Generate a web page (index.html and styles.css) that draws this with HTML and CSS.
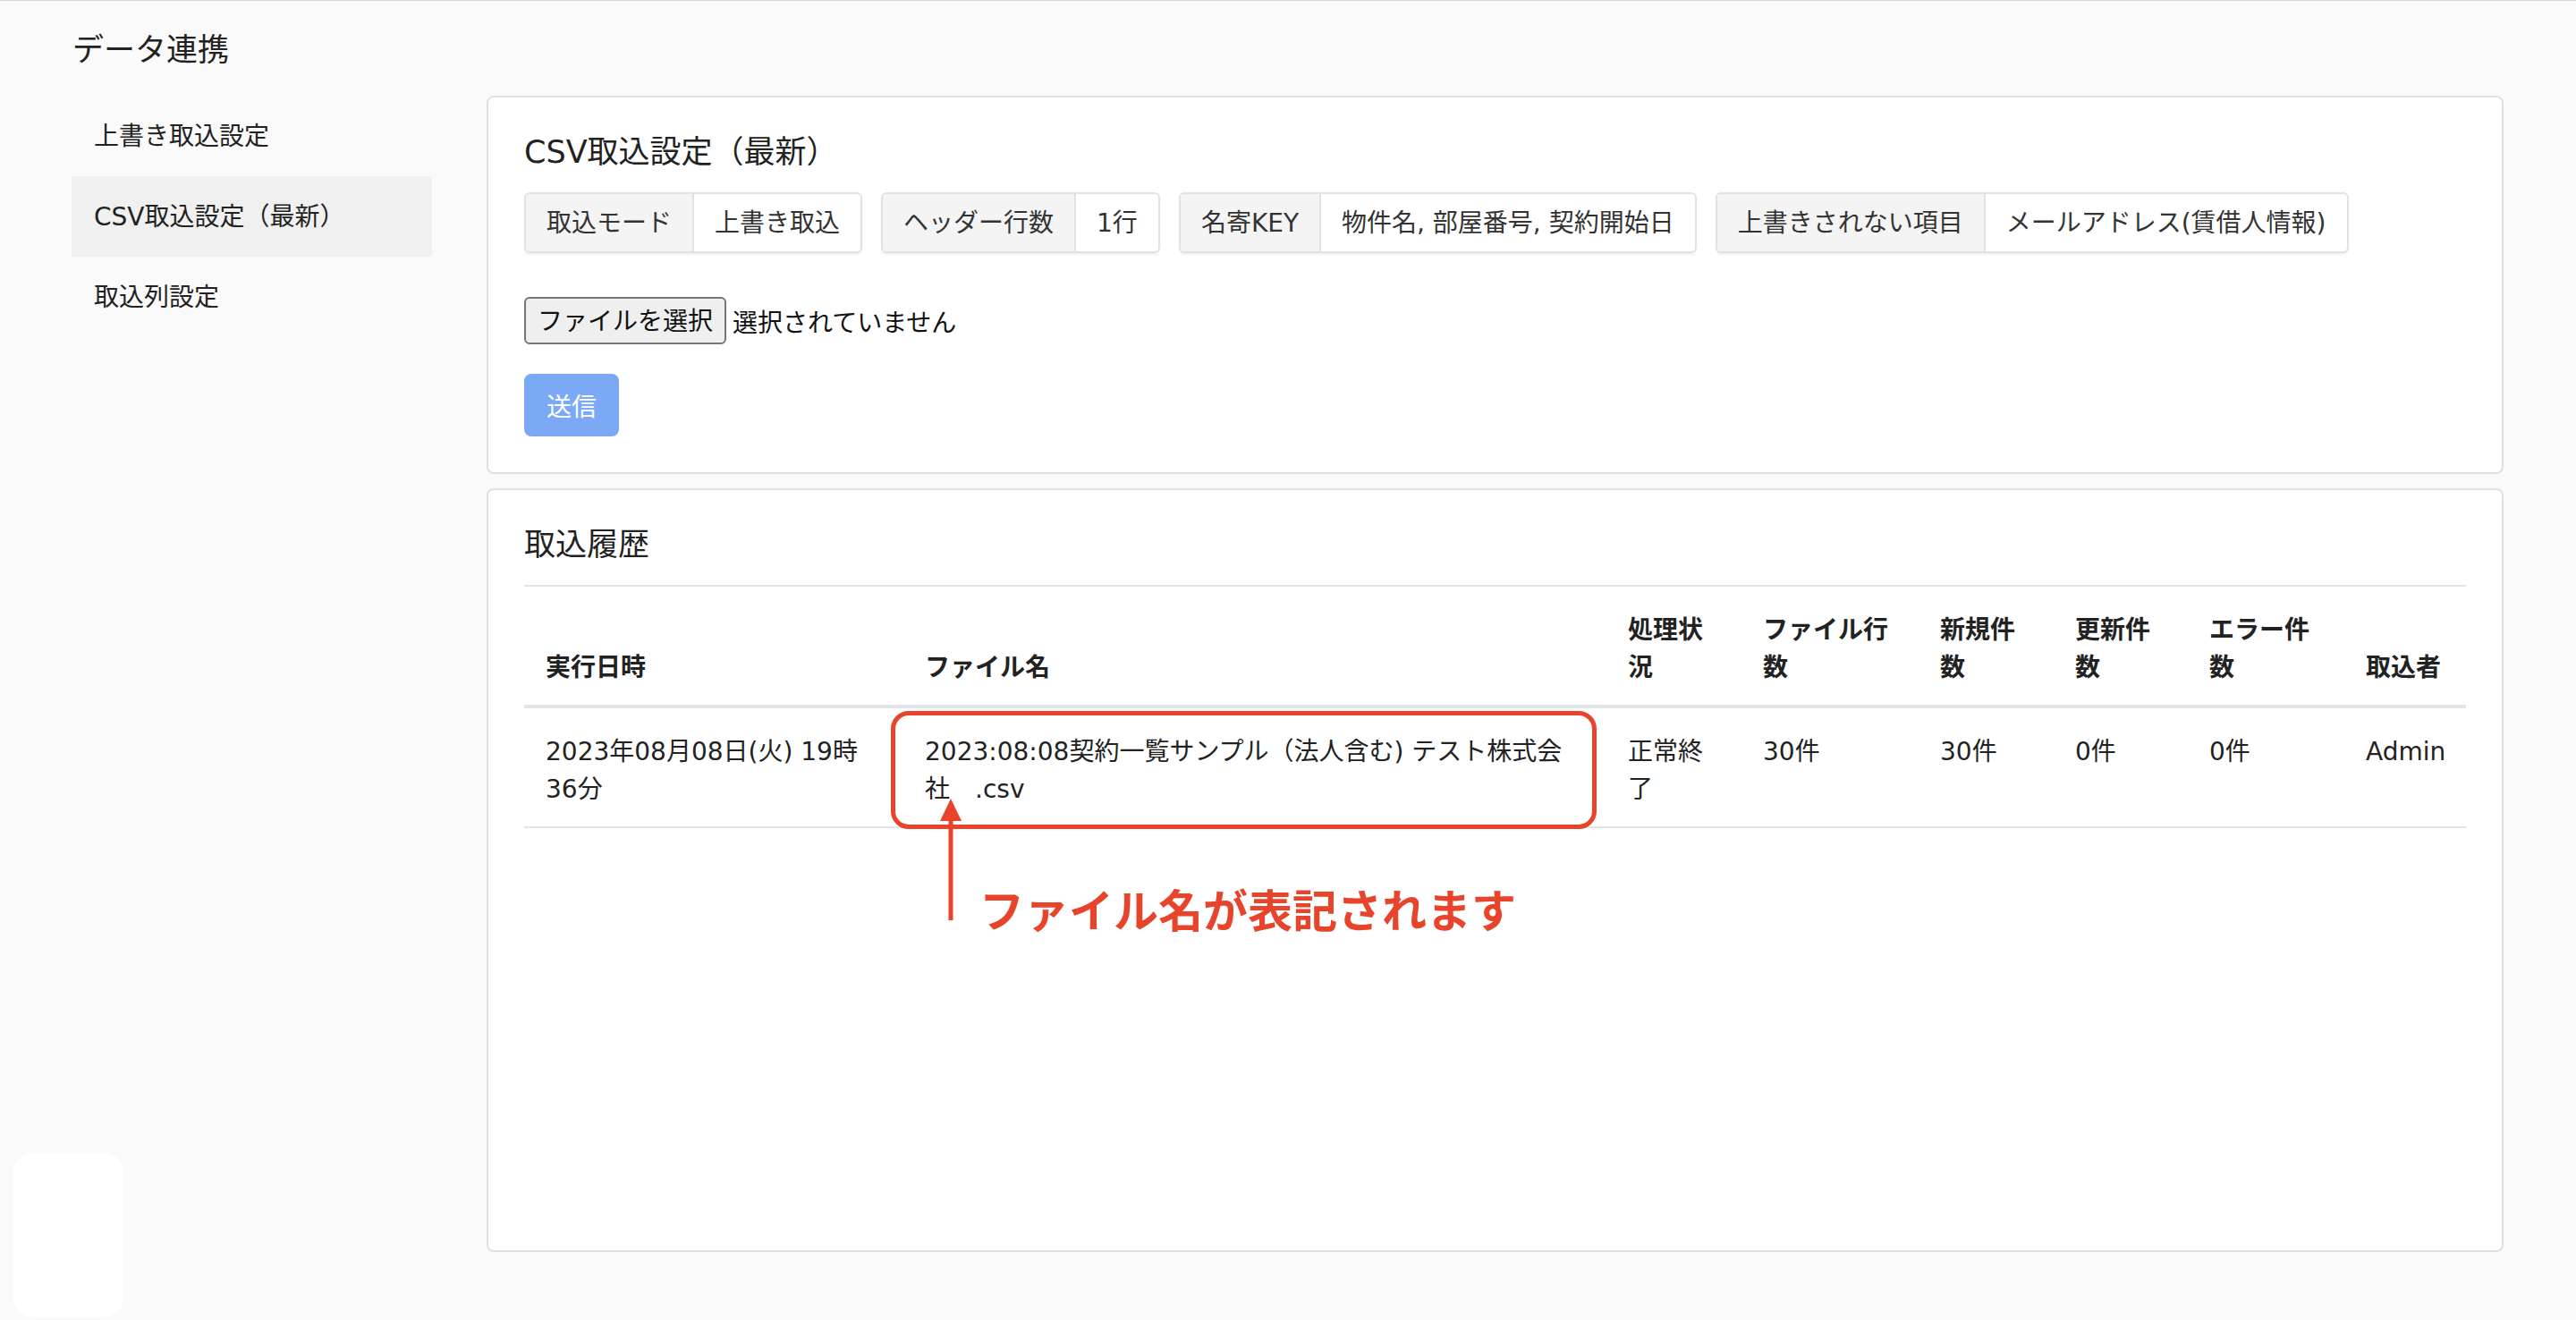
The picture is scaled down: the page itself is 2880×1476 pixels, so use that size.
FILE: index.html
```html
<!DOCTYPE html>
<html lang="ja">
<head>
    <meta charset="UTF-8">
    <meta name="viewport" content="width=device-width, initial-scale=1.0">
    <title>データ連携</title>
    <link rel="stylesheet" href="styles.css">
</head>
<body>
    <div class="page">
        <h1 class="page-title">データ連携</h1>

        <div class="layout">
            <nav class="side-nav">
                <a href="#" class="side-link">上書き取込設定</a>
                <a href="#" class="side-link active">CSV取込設定（最新）</a>
                <a href="#" class="side-link">取込列設定</a>
            </nav>

            <main class="content">
                <section class="card">
                    <h2 class="card-title">CSV取込設定（最新）</h2>
                    <div class="setting-list">
                        <div class="setting">
                            <span class="setting-label">取込モード</span>
                            <span class="setting-value">上書き取込</span>
                        </div>
                        <div class="setting">
                            <span class="setting-label">ヘッダー行数</span>
                            <span class="setting-value">1行</span>
                        </div>
                        <div class="setting">
                            <span class="setting-label">名寄KEY</span>
                            <span class="setting-value">物件名, 部屋番号, 契約開始日</span>
                        </div>
                        <div class="setting">
                            <span class="setting-label">上書きされない項目</span>
                            <span class="setting-value">メールアドレス(賃借人情報)</span>
                        </div>
                    </div>

                    <form class="upload-form">
                        <label class="file-field">
                            <span class="file-button">ファイルを選択</span>
                            <span class="file-name">選択されていません</span>
                        </label>
                        <button type="submit" class="submit-button" disabled>送信</button>
                    </form>
                </section>

                <section class="card history">
                    <h2 class="card-title">取込履歴</h2>
                    <table class="history-table">
                        <colgroup>
                            <col class="col-date">
                            <col class="col-file">
                            <col class="col-status">
                            <col class="col-rows">
                            <col class="col-new">
                            <col class="col-update">
                            <col class="col-error">
                            <col>
                        </colgroup>
                        <thead>
                            <tr>
                                <th>実行日時</th>
                                <th>ファイル名</th>
                                <th>処理状況</th>
                                <th>ファイル行数</th>
                                <th>新規件数</th>
                                <th>更新件数</th>
                                <th>エラー件数</th>
                                <th>取込者</th>
                            </tr>
                        </thead>
                        <tbody>
                            <tr>
                                <td>2023年08月08日(火) 19時36分</td>
                                <td>2023:08:08契約一覧サンプル（法人含む) テスト株式会社　.csv</td>
                                <td>正常終了</td>
                                <td>30件</td>
                                <td>30件</td>
                                <td>0件</td>
                                <td>0件</td>
                                <td>Admin</td>
                            </tr>
                        </tbody>
                    </table>

                    <!-- annotation over the file name column -->
                    <div class="note-box"></div>
                    <svg class="note-arrow" width="24" height="136" viewBox="0 0 24 136">
                        <polygon points="12,0 0,25 24,25" fill="#e8432b"/>
                        <rect x="9.5" y="20" width="5" height="116" fill="#e8432b"/>
                    </svg>
                    <p class="note-text">ファイル名が表記されます</p>
                </section>
            </main>
        </div>
    </div>

    <div class="chat-widget"></div>
</body>
</html>
```

FILE: styles.css
```css
body {
    font-family: "DejaVu Sans", "Noto Sans CJK JP", sans-serif;
    background-color: #fafafa;
    color: #212529;
    margin: 0;
    padding: 0;
    border-top: 1px solid #d6d6d6;
}

.page {
    padding: 31px 81px 0 80px;
}

.page-title {
    font-family: "Noto Sans CJK JP", sans-serif;
    font-size: 35px;
    font-weight: normal;
    line-height: 42px;
    color: #222;
    margin: 0 0 33px 1px;
}

.layout {
    display: grid;
    grid-template-columns: 403px 1fr;
    column-gap: 61px;
}

.side-link {
    display: block;
    height: 90px;
    line-height: 92px;
    padding-left: 25px;
    font-size: 28px;
    color: #222;
    text-decoration: none;
}

.side-link.active {
    background-color: #f0f0f0;
}

.card {
    background-color: #fff;
    border: 2px solid #e0e0e0;
    border-radius: 8px;
    padding: 40px;
}

.card + .card {
    margin-top: 16px;
}

.card-title {
    font-size: 35px;
    font-weight: normal;
    line-height: 42px;
    color: #222;
    margin: 0 0 24px;
}

.setting-list {
    display: flex;
    gap: 21px;
}

.setting {
    display: flex;
    height: 68px;
    box-sizing: border-box;
    border: 2px solid #e2e2e2;
    border-radius: 6px;
    box-shadow: 0 2px 2px rgba(0, 0, 0, 0.06);
    font-size: 28px;
    line-height: 66px;
    color: #333;
    overflow: hidden;
}

.setting-label,
.setting-value {
    padding: 0 23px;
    white-space: nowrap;
}

.setting-label {
    background-color: #f4f4f4;
    border-right: 2px solid #e2e2e2;
}

.upload-form {
    margin-top: 49px;
}

.file-field {
    display: flex;
    align-items: center;
    font-size: 28px;
    color: #111;
}

.file-button {
    height: 53px;
    box-sizing: border-box;
    line-height: 51px;
    padding: 0 13px;
    background-color: #efefef;
    border: 2px solid #767676;
    border-radius: 6px;
}

.file-name {
    margin-left: 7px;
}

.submit-button {
    display: block;
    margin-top: 33px;
    height: 70px;
    padding: 0 25px;
    font-family: inherit;
    font-size: 28px;
    color: #fff;
    background-color: #7ba9f6;
    border: none;
    border-radius: 8px;
}

.history {
    position: relative;
    min-height: 854px;
    box-sizing: border-box;
}

.history-table {
    width: 100%;
    border-collapse: collapse;
    table-layout: fixed;
    font-size: 28px;
    line-height: 42px;
    color: #222;
}

.col-date { width: 424px; }
.col-file { width: 786px; }
.col-status { width: 151px; }
.col-rows { width: 198px; }
.col-new { width: 151px; }
.col-update { width: 150px; }
.col-error { width: 175px; }

.history-table th,
.history-table td {
    padding: 28px 24px 20px;
    text-align: left;
    vertical-align: top;
}

.history-table th {
    vertical-align: bottom;
    font-weight: bold;
    border-top: 2px solid #e1e4e8;
    border-bottom: 4px solid #e1e4e8;
}

.history-table td {
    border-bottom: 2px solid #e1e4e8;
}

.note-box {
    position: absolute;
    left: 450px;
    top: 247px;
    width: 789px;
    height: 132px;
    box-sizing: border-box;
    border: 5px solid #e8432b;
    border-radius: 20px;
}

.note-arrow {
    position: absolute;
    left: 505px;
    top: 345px;
}

.note-text {
    position: absolute;
    left: 549px;
    top: 437px;
    margin: 0;
    font-family: "Noto Sans CJK JP", sans-serif;
    font-size: 50px;
    font-weight: bold;
    line-height: 60px;
    color: #e8432b;
    white-space: nowrap;
}

.chat-widget {
    position: fixed;
    left: 15px;
    bottom: 3px;
    width: 123px;
    height: 184px;
    background-color: #fff;
    border-radius: 22px;
}
```
